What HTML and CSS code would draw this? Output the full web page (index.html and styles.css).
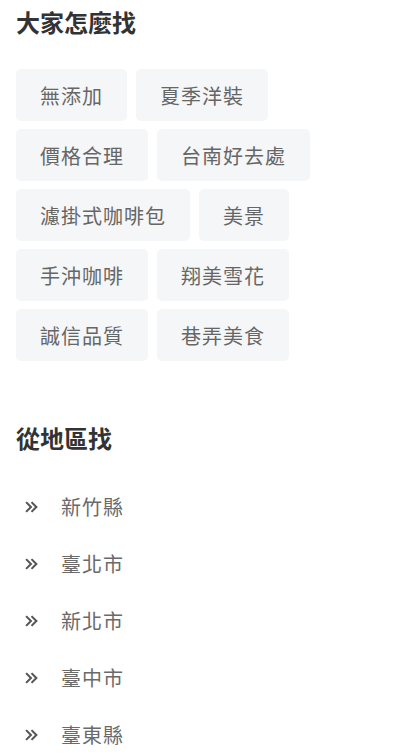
FILE: index.html
```html
<!DOCTYPE html>
<html lang="zh-Hant">
<head>
<meta charset="utf-8">
<link rel="stylesheet" href="styles.css">
</head>
<body>
<section class="block">
  <h2 class="title">大家怎麼找</h2>
  <div class="tags">
    <a class="tag">無添加</a>
    <a class="tag">夏季洋裝</a>
    <a class="tag">價格合理</a>
    <a class="tag">台南好去處</a>
    <a class="tag">濾掛式咖啡包</a>
    <a class="tag">美景</a>
    <a class="tag">手沖咖啡</a>
    <a class="tag">翔美雪花</a>
    <a class="tag">誠信品質</a>
    <a class="tag">巷弄美食</a>
  </div>
</section>
<section class="block block-area">
  <h2 class="title">從地區找</h2>
  <ul class="areas">
    <li class="area"><svg class="chev" viewBox="0 0 12 11"><path d="M1 1l4.5 4.5L1 10M6 1l4.5 4.5L6 10"/></svg><span>新竹縣</span></li>
    <li class="area"><svg class="chev" viewBox="0 0 12 11"><path d="M1 1l4.5 4.5L1 10M6 1l4.5 4.5L6 10"/></svg><span>臺北市</span></li>
    <li class="area"><svg class="chev" viewBox="0 0 12 11"><path d="M1 1l4.5 4.5L1 10M6 1l4.5 4.5L6 10"/></svg><span>新北市</span></li>
    <li class="area"><svg class="chev" viewBox="0 0 12 11"><path d="M1 1l4.5 4.5L1 10M6 1l4.5 4.5L6 10"/></svg><span>臺中市</span></li>
    <li class="area"><svg class="chev" viewBox="0 0 12 11"><path d="M1 1l4.5 4.5L1 10M6 1l4.5 4.5L6 10"/></svg><span>臺東縣</span></li>
  </ul>
</section>
</body>
</html>
```
FILE: styles.css
```css
html, body {
  margin: 0;
  padding: 0;
  background: #ffffff;
}
body {
  font-family: "Noto Sans CJK TC", "Noto Sans", sans-serif;
  padding: 0 16px;
  overflow: hidden;
}
.title {
  margin: 0;
  font-size: 24px;
  line-height: 44px;
  font-weight: 700;
  color: #333333;
}
.tags {
  display: flex;
  flex-wrap: wrap;
  gap: 8px 9px;
  margin-top: 25px;
}
.tag {
  display: flex;
  align-items: center;
  height: 52px;
  padding: 0 24px;
  background: #f5f6f8;
  border-radius: 5px;
  font-size: 20px;
  letter-spacing: 1px;
  color: #666666;
}
.block-area {
  margin-top: 55px;
}
.areas {
  list-style: none;
  margin: 18px 0 0;
  padding: 0;
}
.area {
  display: flex;
  align-items: center;
  height: 57px;
  padding-left: 9px;
  gap: 23px;
  font-size: 20px;
  letter-spacing: 1px;
  color: #6a6a6a;
}
.chev {
  width: 13px;
  height: 12px;
  fill: none;
  stroke: #555555;
  stroke-width: 1.9;
}
```
